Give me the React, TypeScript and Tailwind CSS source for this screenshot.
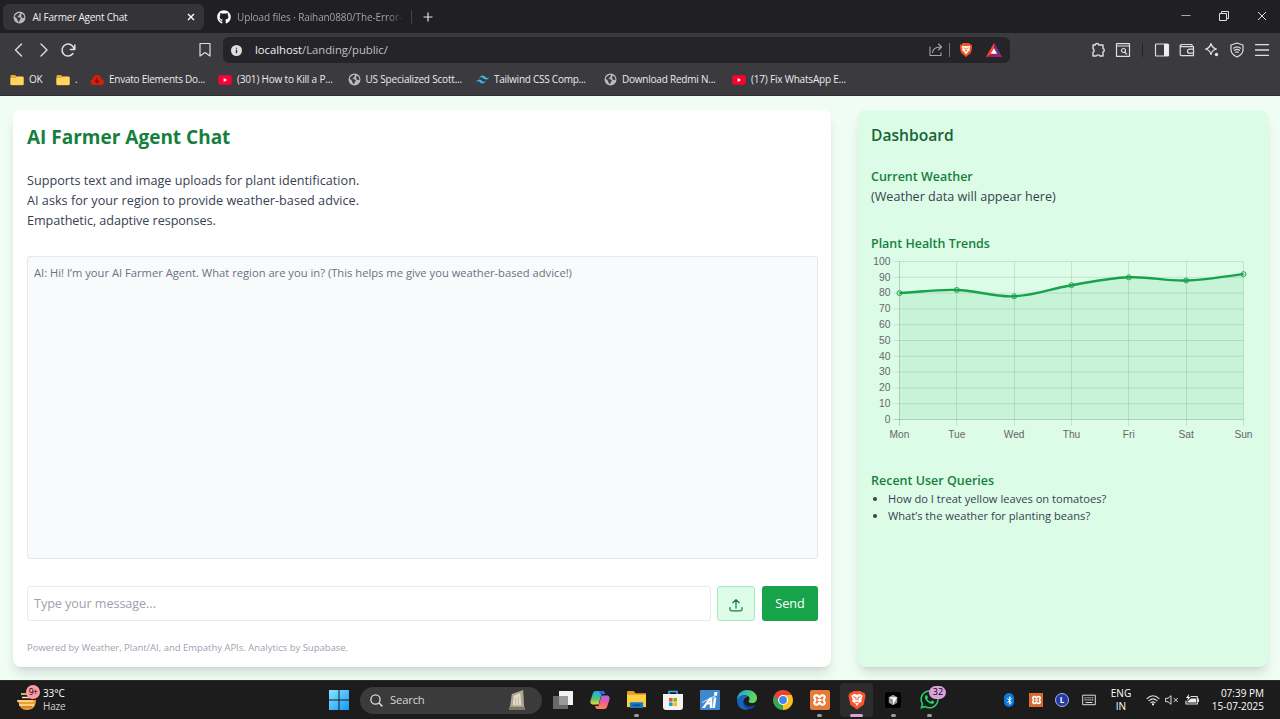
import React from "react";
import { SiTailwindcss } from "react-icons/si";
import { FaGithub, FaWhatsapp, FaBluetoothB } from "react-icons/fa";

type IconProps = { className?: string };

function Globe({ className = "" }: IconProps) {
  return (
    <svg viewBox="0 0 24 24" className={"shrink-0 " + className}>
      <circle cx="12" cy="12" r="11" fill="#b9b9bd" />
      <path d="M3 10c2-4 5-6 9-7 2 1 1 3-1 4-1 2 0 3-3 3 1 2 5 1 6 3 1 2-1 3-2 5 0 2-2 3-3 1-1-3-1-4-3-6-1-1-2-2-3-3z" fill="#3b3a3e" />
      <path d="M15 6c2-1 3 0 5 2l1 5c-3 0-6-1-6-4 1-1 1-2 0-3z" fill="#3b3a3e" />
    </svg>
  );
}

function Folder() {
  return (
    <svg viewBox="0 0 14 12" className="h-3 w-3.5 shrink-0">
      <path d="M0.5 2a1 1 0 0 1 1-1h3.6l1.3 1.5H12.500a1 1 0 0 1 1 1v6.700a1 1 0 0 1-1 1h-11a1 1 0 0 1-1-1z" fill="#e5ad2b" />
      <path d="M0.5 4h4.800l1.300-1.200h6a1 1 0 0 1 1 1v6.300a1 1 0 0 1-1 1h-11.100a1 1 0 0 1-1-1z" fill="#ffd560" />
    </svg>
  );
}

function YouTube() {
  return (
    <svg viewBox="0 0 14 10" className="h-2.5 w-3.5 shrink-0">
      <rect x="0.300" y="0.300" width="13.400" height="9.400" rx="2.200" fill="#ff0033" />
      <path d="M5.600 3v4l3.500-2z" fill="#fff" />
    </svg>
  );
}

function EnvatoCloud() {
  return (
    <svg viewBox="0 0 15 12" className="h-3 w-[14px] shrink-0">
      <path d="M3.600 11.300a3.100 3.100 0 0 1-.8-6.100A4.500 4.500 0 0 1 7.500.7a4.500 4.500 0 0 1 4.500 4.100 3.200 3.200 0 0 1-.5 6.500z" fill="#d4200c" />
      <path d="M7.500 3.500v4.800M5.300 6.500l2.200 2.200 2.200-2.200" fill="none" stroke="#7a1208" strokeWidth="1.300" />
    </svg>
  );
}

function Bookmark({ icon, label, width }: { icon: React.ReactNode; label: string; width: string }) {
  return (
    <div className={"flex shrink-0 items-center whitespace-nowrap " + width}>
      {icon}
      <span className="ml-[5px]">{label}</span>
    </div>
  );
}

const line = { fill: "none", stroke: "#dededf", strokeWidth: 1.2, strokeLinecap: "round" as const, strokeLinejoin: "round" as const };

function Tabs() {
  return (
    <div className="flex h-[33px] items-start bg-[#201f24] pl-[3px] pt-1">
      <div className="flex h-[26px] w-[201px] items-center rounded-md bg-[#343338] pl-[10px] pr-[9px] text-[10px] tracking-[-0.22px] text-[#eeeeef]">
        <Globe className="h-[13px] w-[13px]" />
        <span className="ml-[6.500px] flex-1">AI Farmer Agent Chat</span>
        <svg viewBox="0 0 8 8" className="h-2 w-2"><path d="M1 1l6 6M7 1L1 7" stroke="#fff" strokeWidth="1.400" /></svg>
      </div>
      <div className="flex h-[26px] w-[208px] items-center pl-[13px]">
        <FaGithub className="h-[14px] w-[14px] shrink-0 text-white" />
        <span className="ml-[6px] w-[168px] shrink-0 whitespace-nowrap bg-gradient-to-r from-[#aaaaad] from-90% to-[#201f24] bg-clip-text text-[10px] tracking-[-0.11px] text-transparent">Upload files · Raihan0880/The-Error-</span>
        <span className="ml-[6px] h-3.5 w-px shrink-0 bg-[#45444a]" />
      </div>
      <svg viewBox="0 0 10 10" className="ml-[11px] mt-2 h-2.5 w-2.5"><path d="M5 .5v9M.5 5h9" stroke="#e4e4e5" strokeWidth="1.200" /></svg>
      <div className="ml-auto flex h-6 items-center">
        <svg viewBox="0 0 10 10" className="mr-[28px] h-2.5 w-2.5"><path d="M0.500 4.500h9" stroke="#aaa" strokeWidth="1" /></svg>
        <svg viewBox="0 0 10 10" className="mr-[28px] h-2.5 w-2.5"><path d="M.5 2.500h7v7h-7zM2.500 2V.5h7v7H8" fill="none" stroke="#ddd" strokeWidth="1" /></svg>
        <svg viewBox="0 0 10 10" className="mr-[13.500px] h-2.5 w-2.5"><path d="M1 1l8 8M9 1L1 9" stroke="#ddd" strokeWidth="1" /></svg>
      </div>
    </div>
  );
}

function Toolbar() {
  return (
    <div className="flex h-[34px] items-center">
      <div className="flex w-[223px] items-center pl-[13px]">
        <svg viewBox="0 0 14 16" className="h-4 w-3.5"><path d="M8.500 2L2.500 8l6 6" {...line} strokeWidth={1.4} /></svg>
        <svg viewBox="0 0 14 16" className="ml-[10px] h-4 w-3.5"><path d="M4 2l6 6-6 6" {...line} strokeWidth={1.4} /></svg>
        <svg viewBox="0 0 16 16" className="ml-[9px] h-4 w-4"><path d="M13 11.500A6 6 0 1 1 14 7M14.800 3v4.400h-4.400" {...line} strokeWidth={1.5} /></svg>
        <svg viewBox="0 0 12 16" className="ml-[122.500px] h-4 w-3"><path d="M1 1.500h10v12.500L6 10.500 1 14z" {...line} /></svg>
      </div>
      <div className="flex h-[26px] w-[787px] items-center rounded-[6px] bg-[#252429] pl-2">
        <svg viewBox="0 0 12 12" className="h-[11px] w-[11px]"><circle cx="6" cy="6" r="6" fill="#dedee0" /><path d="M6 5.300V9M6 3v1.200" stroke="#252429" strokeWidth="1.400" /></svg>
        <span className="ml-[13px] flex-1 text-[11.300px] tracking-[-0.030px] text-[#c0c0c4]"><span className="text-[#f0f0f1]">localhost</span>/Landing/public/</span>
        <svg viewBox="0 0 14 14" className="h-3.5 w-3.5"><path d="M1 4v8.500h11v-2.800M3.500 9.500C4 5.500 7 4 12 4M9.500 1l3 3-3 3" {...line} stroke="#a6a6aa" strokeWidth={1.1} /></svg>
        <span className="ml-[6px] h-3.5 w-px bg-[#77767b]" />
        <svg viewBox="0 0 16 18" className="ml-[9px] h-4 w-3.5"><path d="M4.500 1h7l1.500 1.500 1.500.5.500 3-1.300 6L8 17l-5.700-5L1 6l.5-3L3 2.500z" fill="#f4511e" /><path d="M3 5l2-1 3 .8L11 4l2 1-1 2.500 .5 1.500-2 2L8 14l-2.500-3-2-2L4 7.500z" fill="#fff" /><path d="M5 6.500l2 .7M11 6.500l-2 .7M6.500 10h3M8 7v3" stroke="#f4511e" strokeWidth="1" /></svg>
        <svg viewBox="0 0 16 14" className="ml-[13px] mr-[8px] h-[14px] w-4"><path d="M8 0l8 14H0z" fill="#ff4724" /><path d="M0 14l8-5 8 5z" fill="#9e1f63" /><path d="M8 0l8 14-8-5z" fill="#662d91" /><path d="M8 5.200l3.200 5.600H4.800z" fill="#fff" /></svg>
      </div>
      <div className="ml-[80px] flex items-center">
        <svg viewBox="0 0 16 16" className="mr-[8.500px] h-4 w-4"><path d="M3 3h2.200a1.900 1.900 0 0 1 3.700 0H13v3.400a1.900 1.900 0 0 1 0 3.600v4H9.800a2 2 0 0 0-3.600 0H3v-3.800a2 2 0 0 0 0-3.600z" {...line} strokeWidth={1.4} /></svg>
        <svg viewBox="0 0 16 16" className="mr-[11px] h-4 w-4"><path d="M1.500 1.700h13v12.600h-13zM1.500 4h13M10 10.500l1.700 1.700" {...line} /><circle cx="8.500" cy="8.500" r="2" {...line} /></svg>
        <span className="mr-[11px] h-3.5 w-[1.500px] bg-[#232227]" />
        <svg viewBox="0 0 16 16" className="mr-[9px] h-4 w-4"><rect x="1.500" y="2" width="13" height="12" rx="1" {...line} /><path d="M10 2h4.500v12H10z" fill="#eee" /></svg>
        <svg viewBox="0 0 16 16" className="mr-[9px] h-4 w-4"><path d="M13 4.700V2.500H2.500a1.200 1.200 0 0 0 0 2.200h12v9h-12a1.500 1.500 0 0 1-1.300-1.500v-9M14.500 7.200h-4a2 2 0 0 0 0 4h4z" {...line} /></svg>
        <svg viewBox="0 0 16 16" className="mr-[9px] h-4 w-4"><path d="M7 1.500c.8 3.500 2 4.700 5.500 5.500-3.500.8-4.700 2-5.500 5.500C6.200 9 5 7.800 1.500 7 5 6.200 6.200 5 7 1.500z" {...line} /><circle cx="12.500" cy="12.500" r="1.700" fill="#e4e4e6" /></svg>
        <svg viewBox="0 0 16 16" className="mr-[9px] h-4 w-4"><path d="M8 1l6 2v4.500c0 3.800-2.500 6-6 7.500-3.500-1.500-6-3.700-6-7.500V3zM4.600 6.200c2-1.600 4.800-1.600 6.800 0M5.600 8.300c1.500-1.100 3.300-1.100 4.800 0M6.800 10.300c.7-.5 1.700-.5 2.400 0" {...line} /></svg>
        <svg viewBox="0 0 16 16" className="h-4 w-4"><path d="M1.500 2.700h13M1.500 8h13M1.500 13.300h13" {...line} strokeWidth={1.3} /></svg>
      </div>
    </div>
  );
}

function BookmarksBar() {
  return (
    <div className="flex h-[25px] items-center pl-[10px] text-[10px] tracking-[-0.25px] text-[#ececed]">
      <Bookmark width="w-[46px]" icon={<Folder />} label="OK" />
      <Bookmark width="w-[34px]" icon={<Folder />} label="." />
      <Bookmark width="w-[128px]" icon={<EnvatoCloud />} label="Envato Elements Do..." />
      <Bookmark width="w-[129.500px] tracking-[-0.18px]" icon={<YouTube />} label="(301) How to Kill a P..." />
      <Bookmark width="w-[128.500px] tracking-[-0.19px]" icon={<Globe className="h-[13px] w-[13px]" />} label="US Specialized Scott..." />
      <Bookmark width="w-[128px]" icon={<SiTailwindcss className="h-[13px] w-[13px] text-[#38b6e8]" />} label="Tailwind CSS Comp..." />
      <Bookmark width="w-[128px] tracking-[-0.22px]" icon={<Globe className="h-[13px] w-[13px]" />} label="Download Redmi N..." />
      <Bookmark width="w-[128px] tracking-[-0.2px]" icon={<YouTube />} label="(17) Fix WhatsApp E..." />
    </div>
  );
}

const days = ["Mon", "Tue", "Wed", "Thu", "Fri", "Sat", "Sun"];
const health = [80, 82, 78, 85, 90, 88, 92];
const px = (i: number) => 28.5 + i * 57.33;
const py = (v: number) => 168.5 - v * 1.58;

function curve() {
  const pts = health.map((v, i) => ({ x: px(i), y: py(v) }));
  const ctl = pts.map((p, i) => {
    const a = pts[Math.max(i - 1, 0)];
    const b = pts[Math.min(i + 1, pts.length - 1)];
    const d1 = Math.hypot(p.x - a.x, p.y - a.y);
    const d2 = Math.hypot(b.x - p.x, b.y - p.y);
    const f1 = (0.4 * d1) / (d1 + d2);
    const f2 = (0.4 * d2) / (d1 + d2);
    return {
      px: p.x - f1 * (b.x - a.x), py: p.y - f1 * (b.y - a.y),
      nx: p.x + f2 * (b.x - a.x), ny: p.y + f2 * (b.y - a.y),
    };
  });
  let d = `M${pts[0].x} ${pts[0].y}`;
  for (let i = 1; i < pts.length; i++) {
    d += `C${ctl[i - 1].nx} ${ctl[i - 1].ny} ${ctl[i].px} ${ctl[i].py} ${pts[i].x} ${pts[i].y}`;
  }
  return d;
}

function HealthChart() {
  const d = curve();
  return (
    <svg viewBox="0 0 384 196" className="-mt-[3px] h-[196px] w-[384px] font-['Liberation_Sans']">
      {Array.from({ length: 11 }, (_, i) => i * 10).map((v) => (
        <g key={v}>
          <path d={`M22.500 ${py(v)}H372.500`} stroke="#000" strokeOpacity={v === 0 ? 0.17 : 0.1} />
          <text x="19.500" y={py(v) + 3.3} textAnchor="end" fill="#666" fontSize="10.300">{v}</text>
        </g>
      ))}
      {days.map((t, i) => (
        <g key={t}>
          <path d={`M${Math.floor(px(i)) + 0.5} 10.500V175`} stroke="#000" strokeOpacity={i === 0 ? 0.17 : 0.1} />
          <text x={px(i)} y="187" textAnchor="middle" fill="#666" fontSize="10.200">{t}</text>
        </g>
      ))}
      <path d={`${d}V168.500H28.500Z`} fill="#16a34a" fillOpacity="0.1" />
      <path d={d} fill="none" stroke="#16a34a" strokeWidth="2.400" />
      {health.map((v, i) => (
        <circle key={i} cx={px(i)} cy={py(v)} r="2.500" fill="#16a34a" fillOpacity="0.1" stroke="#16a34a" strokeWidth="0.900" />
      ))}
    </svg>
  );
}

function ChatCard() {
  return (
    <section className="flex w-[818px] flex-col rounded-lg bg-white pl-[14px] pr-[13px] shadow-[0_8px_12px_-2px_rgba(0,0,0,0.12),0_3px_5px_-3px_rgba(0,0,0,0.1)]">
      <h1 className="mt-[14px] h-7 text-[19px] font-bold leading-[27px] text-[#15803d]">AI Farmer Agent Chat</h1>
      <div className="mt-[18px] text-[12.650px] leading-5 text-[#374151]">
        <p>Supports text and image uploads for plant identification.</p>
        <p className="tracking-[0.02px]">AI asks for your region to provide weather-based advice.</p>
        <p className="tracking-[-0.07px]">Empathetic, adaptive responses.</p>
      </div>
      <div className="mt-[26px] h-[303px] rounded-[3px] border border-[#e5e7eb] bg-[#f9fafb] px-[6px] pt-[7px] text-[11.200px] leading-[17px] text-[#6b7280]">
        AI: Hi! I’m your AI Farmer Agent. What region are you in? (This helps me give you weather-based advice!)
      </div>
      <div className="mt-[27px] flex h-[35px]">
        <div className="mr-[6px] flex w-[684px] items-center rounded-[3px] border border-[#e9eaee] px-[6px] pt-[2px] text-[12.600px] tracking-[-0.05px] text-[#9ca3af]">Type your message...</div>
        <button className="mr-[7px] flex w-[38px] items-center justify-center rounded-[3px] border border-[#a5e9bd] bg-[#dcfce7] pt-[3px]">
          <svg viewBox="0 0 14 14" className="h-3.5 w-3.5"><path d="M1 9.500v1.800a1.500 1.500 0 0 0 1.500 1.500h9a1.500 1.500 0 0 0 1.500-1.500V9.500M7 10V2M3.900 4.800L7 1.700l3.100 3.100" fill="none" stroke="#15803d" strokeWidth="1.250" strokeLinecap="round" strokeLinejoin="round" /></svg>
        </button>
        <button className="w-14 rounded-[3px] bg-[#16a34a] pt-[2px] text-[12.600px] text-white">Send</button>
      </div>
      <p className="mt-[20px] text-[9.480px] leading-[14px] text-[#9ca3af]">Powered by Weather, Plant/AI, and Empathy APIs. Analytics by Supabase.</p>
    </section>
  );
}

function Dashboard() {
  return (
    <aside className="w-[410px] rounded-lg bg-[#dcfce7] pl-[13px] shadow-[0_8px_12px_-2px_rgba(0,0,0,0.12),0_3px_5px_-3px_rgba(0,0,0,0.1)]">
      <h2 className="mt-[13px] text-[15.600px] font-semibold leading-6 text-[#166534]">Dashboard</h2>
      <h3 className="mt-[20px] text-[12.500px] font-semibold leading-5 text-[#15803d]">Current Weather</h3>
      <p className="text-[12.600px] leading-5 text-[#374151]">(Weather data will appear here)</p>
      <h3 className="mt-[27px] text-[12.450px] font-semibold leading-5 text-[#15803d]">Plant Health Trends</h3>
      <div className="h-[220px]"><HealthChart /></div>
      <h3 className="text-[12.500px] font-semibold leading-5 text-[#15803d]">Recent User Queries</h3>
      <ul className="-mt-px ml-[17px] list-disc text-[11.150px] leading-[17px] text-[#374151]">
        <li>How do I treat yellow leaves on tomatoes?</li>
        <li>What’s the weather for planting beans?</li>
      </ul>
    </aside>
  );
}

function TaskIcon({ children, mark }: { children: React.ReactNode; mark?: "dot" | "active" }) {
  return (
    <div className="flex h-[39px] w-[36.670px] shrink-0 justify-center pt-[2px]">
      <div className={"relative flex h-[34px] w-[33px] items-center justify-center rounded " + (mark === "active" ? "bg-[#2d2c2d]" : "")}>
        {children}
        {mark === "dot" && <span className="absolute bottom-0 h-[3px] w-[5px] rounded-full bg-[#9c9c9c]" />}
        {mark === "active" && <span className="absolute bottom-0 h-[3px] w-[13px] rounded-full bg-[#dba0dd]" />}
      </div>
    </div>
  );
}

function XamppMark({ className = "" }: IconProps) {
  return (
    <svg viewBox="0 0 15 14" className={className}>
      <path d="M4 2.300h1.200c1.500 0 1.300 2 2.300 2s.8-2 2.300-2H11c1.800 0 2.500 2.700.8 3.600v2.200c1.700.9 1 3.600-.8 3.600H9.800c-1.500 0-1.300-2-2.300-2s-.8 2-2.300 2H4c-1.800 0-2.500-2.700-.8-3.600V5.900C1.500 5 2.200 2.300 4 2.300zM5.500 7h4" fill="none" stroke="#fff" strokeWidth="2.200" strokeLinejoin="round" />
    </svg>
  );
}

function Taskbar() {
  return (
    <footer className="flex h-[39px] shrink-0 items-center border-t border-[#2b2b2b] bg-[#1c1c1c] text-white">
      <div className="flex w-[329px] items-center pl-4">
        <div className="relative h-6 w-6">
          <svg viewBox="0 0 24 24" className="h-6 w-6"><path d="M2 12h18c0 6-3 10-9 10-5 0-8-3-9-10z" fill="#f0a030" /><path d="M5 6h6M1 13h16M6 9.500h11M3 17h15" stroke="#ffe099" strokeWidth="1.700" /><path d="M6 19h10" stroke="#d67520" strokeWidth="1.400" /></svg>
          <span className="absolute -top-[3px] left-[10px] flex h-[14px] w-[14px] items-center justify-center rounded-full bg-[#ff99a4] text-[8.500px] leading-none tracking-[-0.5px] text-black">9+</span>
        </div>
        <div className="ml-[3px] text-[10px] leading-[13px]"><p className="tracking-[-0.1px]">33°C</p><p className="tracking-[-0.2px] text-[#d0d0d0]">Haze</p></div>
      </div>
      <svg viewBox="0 0 20 20" className="h-5 w-5"><defs><linearGradient id="win" x1="0" y1="0" x2="1" y2="1"><stop stopColor="#85e6ff" /><stop offset="1" stopColor="#1597f5" /></linearGradient></defs><path d="M0 0h9.500v9.500H0zM10.500 0H20v9.500h-9.500zM0 10.500h9.500V20H0zM10.500 10.500H20V20h-9.500z" fill="url(#win)" /></svg>
      <div className="ml-[11px] mr-[3px] flex h-[27px] w-[182px] items-center rounded-full bg-[#3b3b3b] pl-[10px] pr-[16px] text-[11.300px] text-[#d6d6d6]">
        <svg viewBox="0 0 13 13" className="h-[13px] w-[13px]"><circle cx="5.500" cy="5.500" r="4.600" fill="none" stroke="#ddd" strokeWidth="1.300" /><path d="M9 9l3.400 3.400" stroke="#ddd" strokeWidth="1.500" /></svg>
        <span className="ml-[7px] flex-1 tracking-[-0.2px]">Search</span>
        <svg viewBox="0 0 18 22" className="h-[21px] w-[17px]"><path d="M3 4L15 0l1 18H1z" fill="#ada58e" /><path d="M5 6l7-3 1 13H4z" fill="#e0dccb" /><path d="M0 18h17v3H0z" fill="#857c63" /><path d="M7 8v9M10 7v10" stroke="#bfb9a4" /></svg>
      </div>
      <TaskIcon><svg viewBox="0 0 20 20" className="h-5 w-5"><path d="M6 1h14v14H6z" fill="#f2f2f2" /><path d="M0 6h15v13H0z" fill="#777" fillOpacity="0.850" /><path d="M6 6h9v9H6z" fill="#999" /></svg></TaskIcon>
      <TaskIcon>
        <svg viewBox="0 0 20 20" className="h-5 w-5"><defs><linearGradient id="cpA" x1="0" y1="0" x2="0" y2="1"><stop stopColor="#22a7f0" /><stop offset="0.600" stopColor="#54c56b" /><stop offset="1" stopColor="#f6d43a" /></linearGradient><linearGradient id="cpB" x1="0" y1="0" x2="0" y2="1"><stop stopColor="#a26cf5" /><stop offset="0.500" stopColor="#f0599a" /><stop offset="1" stopColor="#ff8a4c" /></linearGradient></defs><path d="M6 1h6.500c1.500 0 2 1 2.500 3H11.500L8.500 14.500H3.500C0 14.500 0 12 1 9l2-6c.5-1.300 1.500-2 3-2z" fill="url(#cpA)" /><path d="M14 19H7.500C6 19 5.500 18 5 16h3.500l3-10.500h5C20 5.500 20 8 19 11l-2 6c-.5 1.300-1.500 2-3 2z" fill="url(#cpB)" /><path d="M9 1h3.500c1.500 0 2 1 2.500 3h-5z" fill="#3565dc" /></svg>
      </TaskIcon>
      <TaskIcon mark="dot"><svg viewBox="0 0 22 20" className="h-[19px] w-[21px]"><path d="M1 2a1 1 0 0 1 1-1h6l2 2.500h11v14H1z" fill="#dfa024" /><path d="M1 5h20v13H1z" fill="#ffd044" /><path d="M5 13h12a1 1 0 0 1 1 1v5H4v-5a1 1 0 0 1 1-1z" fill="#1579c9" /><path d="M7 16h8" stroke="#0c4d85" strokeWidth="1.500" /></svg></TaskIcon>
      <TaskIcon><svg viewBox="0 0 20 20" className="h-5 w-5"><path d="M6 5V1.500h8V5" fill="none" stroke="#38b6ef" strokeWidth="1.500" /><path d="M0 4h20v13a3 3 0 0 1-3 3H3a3 3 0 0 1-3-3z" fill="#f3f3f3" /><path d="M6 8h3.600v3.600H6z" fill="#f25022" /><path d="M10.400 8H14v3.600h-3.600z" fill="#7fba00" /><path d="M6 12.400h3.600V16H6z" fill="#00a4ef" /><path d="M10.400 12.400H14V16h-3.600z" fill="#ffb900" /></svg></TaskIcon>
      <TaskIcon><svg viewBox="0 0 20 20" className="h-5 w-5"><rect width="20" height="20" rx="1" fill="#3f88cd" /><path d="M2 18L9.500 7.500h2.800V18H9.800v-3.500H7L4.800 18zM8.500 12.300h1.300v-1.900zM13.800 7.500h2.500L15 18h-2.500zM14.500 2h3l-.6 3.500h-3z" fill="#fff" /><path d="M2 12.500L17 5" stroke="#fff" strokeWidth="0.800" /></svg></TaskIcon>
      <TaskIcon>
        <svg viewBox="0 0 20 20" className="h-5 w-5"><defs><linearGradient id="edge" x1="0" y1="0" x2="1" y2="0.300"><stop stopColor="#1c9fe5" /><stop offset="1" stopColor="#62d957" /></linearGradient></defs><path d="M0 10C0 4 4.500 0 10 0s10 3.500 10 8c0 3-2.200 5-5 5-2 0-3.500-.7-3.500-1.500S13 10 12.500 8C11.500 4 3 4 0 10z" fill="url(#edge)" /><path d="M0 10c2-5 8-6 11-3-3 0-4.500 2.500-4.500 5 0 4 4 6.500 7 6.500C7 22 0 18 0 10z" fill="#1763bd" /><path d="M7 10c-1 5 4 8 11.500 5-1 2-2.500 3.300-4.500 4C8 20 5 14 7 10z" fill="#0d4797" /></svg>
      </TaskIcon>
      <TaskIcon><svg viewBox="0 0 20 20" className="h-5 w-5"><path d="M10 10L1.340 5A10 10 0 0 1 18.660 5z" fill="#ea4335" /><path d="M10 10L10 20A10 10 0 0 1 1.340 5z" fill="#34a853" /><path d="M10 10V5h8.660A10 10 0 0 1 10 20z" fill="#fbc116" /><path d="M1.340 5L5.700 12.500 10 10V5z" fill="#ea4335" /><circle cx="10" cy="10" r="5" fill="#fff" /><circle cx="10" cy="10" r="3.900" fill="#4285f4" /></svg></TaskIcon>
      <TaskIcon mark="dot"><span className="flex h-5 w-5 items-center justify-center rounded-[2px] bg-[#e87a38]"><XamppMark className="h-[14px] w-[15px]" /></span></TaskIcon>
      <TaskIcon mark="active"><svg viewBox="0 0 18 21" className="h-5 w-[18px]"><path d="M5 1h8l1.500 1.700 2-.2L18 6l-2 9.500L9 20.500 2 15.500 0 6l1.500-3.500 2 .2z" fill="#fb542b" /><path d="M3 6l3-2 3 1 3-1 3 2-1.500 4 .5 2-3 2L9 17l-2-3-3-2 .5-2z" fill="#fff" /><path d="M5 7l3 1v3M13 7l-3 1v3M7 13h4" fill="none" stroke="#fb542b" strokeWidth="1" /></svg></TaskIcon>
      <TaskIcon mark="dot"><svg viewBox="0 0 17 17" className="h-4 w-4"><rect width="17" height="17" rx="3" fill="#000" /><path d="M4 5.500L8.500 3 13 5.500v6L8.500 14 4 11.500z" fill="#999" /><path d="M4 5.500h9l-4.500 8V8z" fill="#fff" /></svg></TaskIcon>
      <TaskIcon mark="dot">
        <FaWhatsapp className="h-[21px] w-[21px] text-[#25d366]" />
        <span className="absolute left-[16px] top-[3px] flex h-[13px] w-[17px] items-center justify-center rounded-full bg-[#dba0dd] text-[9px] text-black">32</span>
      </TaskIcon>
      <div className="ml-auto flex items-center">
        <div className="flex items-center">
          <span className="mr-[15px] flex h-[14px] w-[10px] items-center justify-center rounded-[5px] bg-[#0a7be0]"><FaBluetoothB className="h-[9px] w-[9px]" /></span>
          <span className="mr-[12px] flex h-[14px] w-[14px] items-center justify-center bg-[#d96a2d]"><XamppMark className="h-[10px] w-[11px]" /></span>
          <span className="mr-[13px] flex h-[14px] w-[14px] items-center justify-center rounded-full border border-[#a9b4ef] bg-[#2439a4] text-[8px] font-bold">L</span>
          <svg viewBox="0 0 14 12" className="h-3 w-3.5"><path d="M.7 1.200h12.600v9.500H.7z" fill="none" stroke="#ddd" /><path d="M2.500 3.700h9M2.500 5.900h9" stroke="#ddd" strokeWidth="1.100" strokeDasharray="1.200 0.700" /><path d="M3.500 8.500h7" stroke="#ddd" /></svg>
        </div>
        <div className="ml-[13px] w-[24px] text-center text-[10px] leading-[13.500px]"><p>ENG</p><p>IN</p></div>
        <svg viewBox="0 0 14 12" className="ml-[13px] h-3 w-3.5"><path d="M1 4.600c3.700-3.600 8.300-3.600 12 0M3 6.600c2.500-2.300 5.500-2.300 8 0M5 8.600c1.300-1.100 2.700-1.100 4 0" {...line} /><circle cx="7" cy="10.300" r="1.100" fill="#fff" /></svg>
        <svg viewBox="0 0 14 12" className="ml-[5px] h-3 w-3.5"><path d="M1 4.300h2L6 1.700v8.600L3 7.700H1zM9 4.200l3.500 3.500M12.500 4.200L9 7.700" {...line} strokeWidth={1} /></svg>
        <svg viewBox="0 0 14 12" className="ml-[6px] h-3 w-3.5"><path d="M6 2.500h6.300v7.500H1V7M13.500 5v2.500" {...line} /><path d="M6 4.500h5v4H2.500V7.500z" fill="#eee" /><path d="M4 0L1 4h2L2 7l3.500-4h-2z" fill="#fff" /></svg>
        <div className="ml-[9px] mr-4 w-[56px] whitespace-nowrap text-right text-[10px] leading-[13px]"><p>07:39 PM</p><p>15-07-2025</p></div>
      </div>
    </footer>
  );
}

export default function App() {
  return (
    <div className="flex h-[719px] w-[1280px] flex-col overflow-hidden font-['Open_Sans','Noto_Sans',sans-serif]">
      <header className="h-24 shrink-0 border-b border-[#2f2e32] bg-[#3b3a3e]">
        <Tabs />
        <Toolbar />
        <BookmarksBar />
      </header>
      <main className="flex min-h-0 flex-1 gap-[27px] bg-[#f0fdf4] pb-[13px] pl-[13px] pt-[13.500px]">
        <ChatCard />
        <Dashboard />
      </main>
      <Taskbar />
    </div>
  );
}
